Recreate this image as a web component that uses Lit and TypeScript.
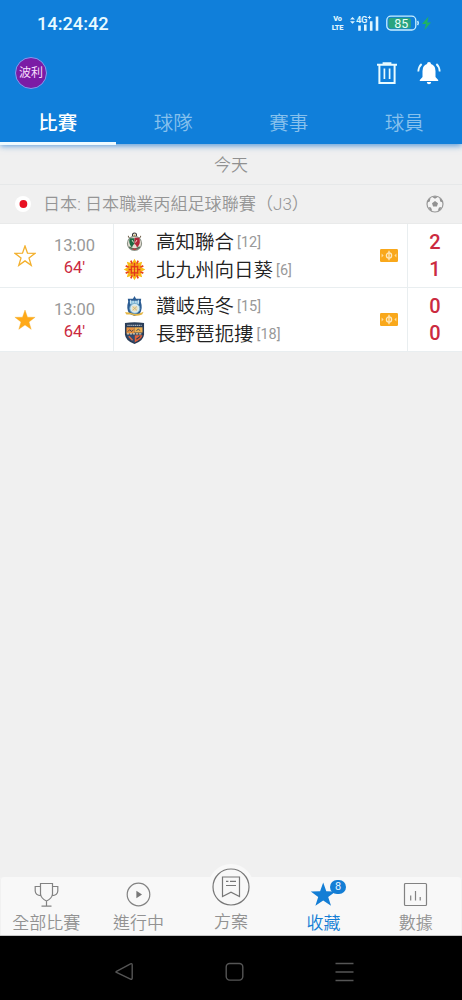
import { LitElement, html, css, svg } from "lit";
import { customElement, property } from "lit/decorators.js";
import { classMap } from "lit/directives/class-map.js";

const STAR = "M11 1 L13.5 8.2 L21.1 8.3 L15 12.9 L17.2 20.3 L11 15.9 L4.8 20.3 L7 12.9 L0.9 8.3 L8.5 8.2 Z";

const crests: Record<string, unknown> = {
  kochi: svg`
    <circle cx="11" cy="3.2" r="2.1" fill="none" stroke="#3c3a38" stroke-width="1.2"/>
    <circle cx="11" cy="3.4" r="0.9" fill="#c9a23f"/>
    <path d="M6 6 Q4 6 4.6 4 M16 6 Q18 6 17.4 4" fill="none" stroke="#6b5a44"/>
    <circle cx="11" cy="12" r="7.4" fill="#e9e3d8" stroke="#8d9388" stroke-width="1.2"/>
    <path d="M6 6.5 H11 V13 L8 16 Q4.4 12 6 6.5Z" fill="#1d6a43"/>
    <path d="M11 6 H16 Q18 12 14 16 L11 13Z" fill="#b4273a"/>
    <path d="M8.5 8.5 L10 11 M13.5 8.5 L12 11" stroke="#f5e9dd" stroke-width="1" fill="none"/>
    <path d="M9 14 L11 12.5 L13 14 L11 16Z" fill="#e8d9cf"/>
    <path d="M5.5 15.5 Q11 20.5 16.5 15.5" stroke="#54715b" stroke-width="1.8" fill="none"/>
    <path d="M9 18 H13" stroke="#c63743" stroke-width="1.4"/>`,
  giravanz: svg`
    <g fill="#f8bd12">${[0, 45, 90, 135].map(
      (a) => svg`<path transform="rotate(${a} 11 11)" d="M11 -0.3 L14 5 V17 L11 22.3 L8 17 V5Z"/>`)}</g>
    <g stroke="#e8431c" stroke-width="1.8">${[22.5, 67.5, 112.5, 157.5].map(
      (a) => svg`<path transform="rotate(${a} 11 11)" d="M11 1 V6 M11 16 V21"/>`)}</g>
    <circle cx="11" cy="11" r="6.8" fill="#f49a1a"/>
    <path d="M11 4 V18 M7 8 H15 M5 11.2 H17 M7 14.5 H15 M7.8 7 V15.5 M14.2 7 V15.5" stroke="#e23a1a" stroke-width="1.3" fill="none"/>
    <path d="M9.4 9.6 V13 M12.6 9.6 V13" stroke="#ffdc3a" stroke-width="1.1"/>`,
  sanuki: svg`
    <path d="M11 0 L12.6 3 H18 L17.6 6 Q20 13 16.5 18.5 L11 21 L5.5 18.5 Q2 13 4.4 6 L4 3 H9.4Z" fill="#2b5b92"/>
    <path d="M6 5 H16 L15.7 9 H6.3Z" fill="#7fb8d8"/>
    <path d="M7 4 V8 M9.5 5 V8 M12.5 5 V8 M15 4 V8" stroke="#e8f4fa" stroke-width="0.9"/>
    <circle cx="11.3" cy="13" r="5.2" fill="#d8e9ee" stroke="#78aecb" stroke-width="1"/>
    <circle cx="11.3" cy="13" r="2.9" fill="#f1dfb0"/>
    <path d="M9 11 L13.5 15 M13.5 11 L9 15" stroke="#b5a57a" stroke-width="0.7"/>
    <path d="M1 17 Q6 16.5 10 18.7 Q15 19.5 20.5 16.5 L19 19.5 Q12 22 7.5 19.5 L2.5 19.5Z" fill="#e4b544"/>`,
  nagano: svg`
    <path d="M1 0 Q11 -1.5 21 0 V12 Q20.5 18.5 11 22 Q1.5 18.5 1 12Z" fill="#2a3d57"/>
    <path d="M2.6 4.5 H11 V11 H2.6Z" fill="#e8913f"/>
    <path d="M11 4.5 H19.4 V10 H11Z" fill="#eeb050"/>
    <path d="M11 12.8 H19.3 Q18.5 17 11 20.4Z" fill="#e4603a"/>
    <path d="M2.8 12.8 H11 V20.4 Q3.5 17 2.8 12.8Z" fill="#2f4c73"/>
    <path d="M3.5 2.5 H18.5" stroke="#a9b3bf" stroke-width="1.3" stroke-dasharray="1.4 0.6"/>
    <path d="M4 9 L6 7 L8 9 L10 7 M13 8 L15 6.5 L17 8" stroke="#2c3e55" stroke-width="0.9" fill="none"/>
    <path d="M3 11.4 H19" stroke="#ded3ba" stroke-width="1.2" stroke-dasharray="2.4 0.8"/>
    <path d="M5 14 L9 18" stroke="#df6b42" stroke-width="1.5"/>
    <path d="M13 17 L17 14" stroke="#2a3d57" stroke-width="1.2"/>`,
};

interface Team { name: string; rank: number; crest: string; goals: number }
interface Match { time: string; minute: string; starred: boolean; teams: Team[] }

const matches: Match[] = [
  { time: "13:00", minute: "64'", starred: false, teams: [
    { name: "高知聯合", rank: 12, crest: "kochi", goals: 2 },
    { name: "北九州向日葵", rank: 6, crest: "giravanz", goals: 1 } ] },
  { time: "13:00", minute: "64'", starred: true, teams: [
    { name: "讚岐烏冬", rank: 15, crest: "sanuki", goals: 0 },
    { name: "長野琶扼摟", rank: 18, crest: "nagano", goals: 0 } ] },
];

@customElement("match-row")
export class MatchRow extends LitElement {
  @property({ attribute: false }) match!: Match;

  static styles = css`
    :host { display: block; background: #fff; }
    .row { display: grid; grid-template-columns: 49px 64px 1fr 36px 55px; height: 63px; border-bottom: 1px solid #e9eef0; }
    .fav { display: flex; align-items: center; justify-content: center; }
    .fav svg { width: 22px; height: 22px; }
    .when { display: flex; flex-direction: column; align-items: center; padding-top: 10px; width: 51px; box-sizing: border-box; }
    .time { font-size: 16.5px; line-height: 23px; color: #999; }
    .minute { font-size: 16.5px; line-height: 22px; color: #cb2a40; }
    .teams { border-left: 1px solid #e9eef0; padding: 5px 0 0 10px; display: flex; flex-direction: column; }
    .team { display: flex; align-items: center; height: 27.4px; white-space: nowrap; }
    .crest { width: 21px; height: 21px; margin: 0 11px 1px 0; flex: none; overflow: visible; }
    .name { font-size: 19.5px; line-height: 27px; color: #222; font-weight: 350; }
    .rank { font-size: 14.5px; line-height: 27px; color: #999; margin-left: 3px; }
    .pitch { display: flex; align-items: center; padding-left: 9px; }
    .pitch svg { width: 18px; height: 13px; }
    .score { border-left: 1px solid #e9eef0; padding-top: 5px; display: flex; flex-direction: column; align-items: center; }
    .goals { font-size: 20px; line-height: 27.4px; font-weight: 500; color: #cb2a40; }
  `;

  render() {
    const m = this.match;
    return html`<div class="row">
      <div class="fav"><svg viewBox="0 0 22 22"><path d=${STAR} fill=${m.starred ? "#ffa918" : "none"} stroke="#f3b02d" stroke-width=${m.starred ? 0.4 : 1.3}/></svg></div>
      <div class="when"><span class="time">${m.time}</span><span class="minute">${m.minute}</span></div>
      <div class="teams">${m.teams.map((t) => html`<div class="team">
        <svg class="crest" viewBox="0 0 22 22">${crests[t.crest]}</svg>
        <span class="name">${t.name}</span><span class="rank">[${t.rank}]</span></div>`)}</div>
      <div class="pitch"><svg viewBox="0 0 18 13"><rect width="18" height="13" rx="1.2" fill="#f9a81b"/>
        <g fill="none" stroke="#ffe8bd" stroke-width="1.3"><circle cx="9" cy="6.5" r="2.6"/><path d="M9 1.8V11.2"/></g>
        <path d="M1.6 4.6L3.6 6.5L1.6 8.4ZM16.4 4.6L14.4 6.5L16.4 8.4Z" fill="#ffdc9a"/></svg></div>
      <div class="score">${m.teams.map((t) => html`<span class="goals">${t.goals}</span>`)}</div>
    </div>`;
  }
}

@customElement("app-root")
export class AppRoot extends LitElement {
  static styles = css`
    :host { display: flex; flex-direction: column; height: 1000px; width: 462px; overflow: hidden; background: #f0f0f0;
      font-family: Roboto, "Noto Sans CJK TC", sans-serif; }
    svg { display: block; flex: none; }
    .header { background: #107fda; color: #fff; height: 144px; flex: none; box-shadow: 0 2px 6px rgba(16, 110, 205, 0.65); z-index: 1; }
    .status { height: 46px; display: flex; align-items: center; box-sizing: border-box; padding: 0 30px 0 37px; }
    .clock { font-size: 18.2px; font-weight: 500; flex: 1; color: #e9fbff; }
    .volte { display: flex; flex-direction: column; align-items: center; font-size: 7.4px; line-height: 9px; font-weight: 900; width: 13px; margin-right: 6px; color: #dff5ff; letter-spacing: -0.2px; }
    .net { margin-right: 7px; }
    .net-label { font-size: 9.4px; font-weight: 600; fill: #dff5ff; letter-spacing: -0.3px; }
    .bat-label { font-size: 12.5px; font-weight: 400; fill: #e9fff8; }
    .toolbar { height: 54px; display: flex; align-items: center; padding: 0 21px 0 15px; }
    .avatar { width: 30px; height: 30px; border: 1px solid #809df0; border-radius: 50%; background: #7b1ca5; font-size: 12px; line-height: 31px; text-align: center; color: #f6dffc; margin-right: auto; }
    .trash { margin-right: 19px; }
    .tabs { display: grid; grid-template-columns: repeat(4, 1fr); height: 45px; }
    .tab { text-align: center; font-size: 19.5px; line-height: 47px; color: #87c1ed; box-sizing: border-box; height: 45px; font-weight: 350; }
    .tab.active { color: #fff; font-weight: 500; border-bottom: 3px solid #eefaff; }
    .day { flex: none; text-align: center; font-size: 17px; line-height: 42px; color: #909090; border-bottom: 1px solid #e6e8e9; box-sizing: border-box; height: 41px; font-weight: 350; }
    .league { height: 39px; flex: none; display: flex; align-items: center; border-bottom: 1px solid #e9eaea; box-sizing: border-box; padding: 0 18px 0 15px; color: #959595; font-size: 17.1px; font-weight: 350; white-space: nowrap; }
    .flag { margin-right: 12px; }
    .league-name { flex: 1; padding-bottom: 3px; }
    .content { flex: 1; display: flex; flex-direction: column; min-height: 0; }
    .nav { flex: none; height: 59px; background: #f8f8f8; display: grid; grid-template-columns: repeat(5, 1fr); border-radius: 3px 3px 0 0; border-bottom: 1px solid #c6c6c6; box-sizing: border-box; box-shadow: inset 1px 0 #f1f1f1, inset -1px 0 #f1f1f1; }
    .item { display: flex; flex-direction: column; align-items: center; color: #929292; font-size: 17px; font-weight: 350; position: relative; padding-top: 4px; height: 59px; box-sizing: border-box; }
    .item span.label { line-height: 24px; margin-top: 3px; }
    .item.active { color: #147ed5; }
    .item.raised { padding-top: 0; margin-top: -13px; height: 72px; }
    .disc { width: 46px; height: 46px; border-radius: 50%; background: #f8f8f8; display: flex; align-items: center; justify-content: center; }
    .item.raised span.label { margin-top: 0; }
    .badge { position: absolute; left: 53px; top: 3px; width: 16px; height: 14px; border-radius: 7px; background: #147ed5; color: #e4f5ff; font-size: 11px; line-height: 14px; text-align: center; font-weight: 400; }
    .system { height: 64px; flex: none; background: #000; display: flex; align-items: center; padding: 7px 0 0 115px; box-sizing: border-box; gap: 91px; }
  `;

  private icon(kind: string) {
    const shapes: Record<string, unknown> = {
      cup: svg`<path d="M8.5 2.5H20.5V13Q20 17.5 14.5 20Q9 17.5 8.5 13ZM8.5 5.5H3.2V10Q3.5 14.5 9 14.7M20.5 5.5H25.8V10Q25.5 14.5 20 14.7M14.5 20V25M9.5 25.2H19.5"/>`,
      live: svg`<circle cx="14.5" cy="13.5" r="11.3"/><path d="M12.4 9.7V17.3L18 13.5Z" fill="#777" stroke="none"/>`,
      fav: svg`<path d="M14.2 1.5L17.3 10.2L26.6 10.4L19.2 15.9L22 24.8L14.2 19.5L6.4 24.8L9.2 15.9L1.8 10.4L11.1 10.2Z" fill="#147ed5" stroke="none"/>`,
      data: svg`<rect x="3.5" y="2.5" width="22" height="22" rx="1"/><path d="M9.7 14.5V19.5M14.5 10V19.5M19.2 16V19.5"/>`,
    };
    return html`<svg width="29" height="27" viewBox="0 0 29 27" fill="none" stroke="#828282" stroke-width="1.2">${shapes[kind]}</svg>`;
  }

  render() {
    const tabs = ["比賽", "球隊", "賽事", "球員"];
    return html`
      <div class="header">
        <div class="status">
          <span class="clock">14:24:42</span>
          <span class="volte"><span>Vo</span><span>LTE</span></span>
          <svg class="net" width="29" height="18" viewBox="0 0 29 18">
            <path d="M0 5.6L2.5 3L5 5.6ZM0 7.2L2.5 9.8L5 7.2Z" fill="#dff5ff"/>
            <text class="net-label" x="6" y="8.8">4G</text><path d="M19.6 1.8V5.2M17.9 3.5H21.3" stroke="#dff5ff" stroke-width="1"/>
            <path d="M9.5 16.8V11.5M15.3 16.8V10.5M21.2 16.8V7.2M27 16.8V2.5" stroke="#dff5ff" stroke-width="2.6"/></svg>
          <svg width="46" height="18" viewBox="0 0 46 18">
            <rect x="0.8" y="2.2" width="29" height="13.8" rx="4" fill="none" stroke="#c9efff" stroke-width="1.3"/>
            <rect x="2.4" y="3.8" width="22.5" height="10.6" rx="2.5" fill="#2aa47f"/>
            <path d="M31.6 7Q33 9 31.6 11.2" fill="none" stroke="#c9efff" stroke-width="1.5"/>
            <text class="bat-label" x="15.3" y="13.6" text-anchor="middle">85</text>
            <path d="M42.5 2.5L36 10H40L38.4 16L45 8.5H41.2Z" fill="#1fb264"/></svg>
        </div>
        <div class="toolbar">
          <div class="avatar">波利</div>
          <svg class="trash" width="22" height="26" viewBox="0 0 22 26" fill="none" stroke="#e9fbff">
            <path d="M1 4.7H21M6.6 3.3H15.4" stroke-width="2"/><path d="M3.4 5V23H18.6V5" stroke-width="2"/><path d="M8.4 8.5V19M13.6 8.5V19" stroke-width="1.7"/></svg>
          <svg width="24" height="26" viewBox="0 0 24 26">
            <path d="M12 2Q14 2 14 4Q18.5 5.3 18.5 11V17L21.2 20V21H2.8V20L5.5 17V11Q5.5 5.3 10 4Q10 2 12 2ZM9.8 22H14.2Q14 24.3 12 24.3Q10 24.3 9.8 22Z" fill="#fff"/>
            <path d="M4.6 4Q1.6 6.6 1.3 11.5M19.4 4Q22.4 6.6 22.7 11.5" fill="none" stroke="#e9fbff" stroke-width="1.8"/></svg>
        </div>
        <div class="tabs">${tabs.map((t, i) => html`<div class=${classMap({ tab: true, active: i === 0 })}>${t}</div>`)}</div>
      </div>
      <div class="content">
        <div class="day">今天</div>
        <div class="league">
          <svg class="flag" width="16" height="16" viewBox="0 0 16 16"><circle cx="8" cy="8" r="8" fill="#fff"/><circle cx="8.4" cy="8" r="3.9" fill="#e81123"/></svg>
          <span class="league-name">日本: 日本職業丙組足球聯賽（J3）</span>
          <svg width="18" height="18" viewBox="0 0 18 18"><circle cx="9" cy="9" r="8" fill="#f4f4f4" stroke="#999" stroke-width="1.2"/>
            <path d="M9 6L12 8.2L10.9 11.6H7.1L6 8.2ZM5.8 1.8L9 3.7L12.2 1.8Q9 0.5 5.8 1.8ZM1.2 7.5L3.8 6.4L4.5 3Q1.5 4.5 1.2 7.5ZM16.8 7.5L14.2 6.4L13.5 3Q16.5 4.5 16.8 7.5ZM2.3 12L5 12.5L6.3 16Q3.5 15 2.3 12ZM15.7 12L13 12.5L11.7 16Q14.5 15 15.7 12Z" fill="#929292"/></svg>
        </div>
        ${matches.map((m) => html`<match-row .match=${m}></match-row>`)}
      </div>
      <div class="nav">
        <div class="item">${this.icon("cup")}<span class="label">全部比賽</span></div>
        <div class="item">${this.icon("live")}<span class="label">進行中</span></div>
        <div class="item raised"><div class="disc"><svg width="38" height="38" viewBox="0 0 38 38" fill="none" stroke="#777" stroke-width="1.2">
          <circle cx="19" cy="19" r="18"/><path d="M10.5 9H27.5V28.5L19 24.2L10.5 28.5Z"/><path d="M14 13.4H16.4M18 13.4H24M14 17.5H24"/></svg></div><span class="label">方案</span></div>
        <div class="item active">${this.icon("fav")}<span class="badge">8</span><span class="label">收藏</span></div>
        <div class="item">${this.icon("data")}<span class="label">數據</span></div>
      </div>
      <div class="system">
        <svg width="19" height="20" viewBox="0 0 19 20" fill="none" stroke="#555" stroke-width="1.4"><path d="M1.5 9.3L15.5 1.8Q17.2 1.2 17.2 3V16Q17.2 17.8 15.5 17.1L1.5 10.5Q0.5 9.9 1.5 9.3Z"/></svg>
        <svg width="19" height="20" viewBox="0 0 19 20" fill="none" stroke="#555" stroke-width="1.4"><rect x="1.2" y="1.5" width="16.6" height="16.6" rx="3.5"/></svg>
        <svg width="19" height="20" viewBox="0 0 19 20" fill="none" stroke="#555" stroke-width="1.5"><path d="M0.5 1.5H18.5M0.5 10H18.5M0.5 18.5H18.5"/></svg>
      </div>`;
  }
}
